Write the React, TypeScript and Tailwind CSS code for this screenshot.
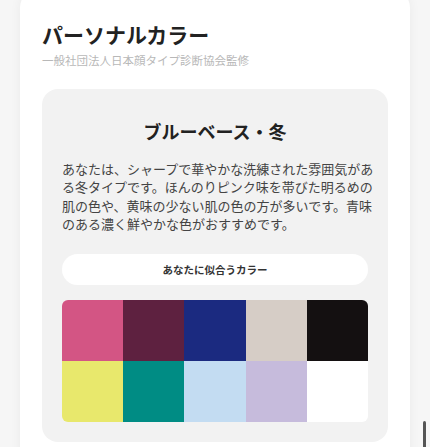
const swatches = [
  "#d35584",
  "#5e2140",
  "#1b2a80",
  "#d6cdc6",
  "#141011",
  "#e8e86c",
  "#008c84",
  "#c3dcf2",
  "#c6bbdc",
  "#ffffff",
];

export default function App() {
  return (
    <div
      className="relative h-[447px] w-[430px] overflow-hidden bg-[#f6f6f6]"
      style={{ fontFamily: '"Noto Sans CJK JP", "Noto Sans", sans-serif' }}
    >
      <div className="mx-[20px] -mt-[12px] rounded-[20px] bg-white px-[22px] pt-[32px] pb-[40px] shadow-[0_0_12px_rgba(0,0,0,0.05)]">
        <h1 className="text-[21px] leading-[28px] font-bold text-[#222]">パーソナルカラー</h1>
        <p className="mt-[4px] text-[11.5px] leading-[16px] text-[#b8b8b8]">一般社団法人日本顔タイプ診断協会監修</p>

        <div className="mt-[21px] rounded-[16px] bg-[#f2f2f2] px-[20px] pt-[28px] pb-[20px]">
          <h2 className="text-center text-[18px] leading-[28px] font-bold text-[#222]">ブルーベース・冬</h2>
          <p className="mt-[15px] w-[314px] text-[13px] leading-[18.3px] text-[#444]">
            あなたは、シャープで華やかな洗練された雰囲気がある冬タイプです。ほんのりピンク味を帯びた明るめの肌の色や、黄味の少ない肌の色の方が多いです。青味のある濃く鮮やかな色がおすすめです。
          </p>

          <div className="mt-[21px] flex h-[31px] items-center justify-center rounded-full bg-white text-[10.5px] font-bold text-[#333]">
            あなたに似合うカラー
          </div>

          <div className="mt-[15px] grid grid-cols-5 overflow-hidden rounded-[6px]">
            {swatches.map((c) => (
              <div key={c} className="h-[61px]" style={{ backgroundColor: c }} />
            ))}
          </div>
        </div>
      </div>

      <div className="absolute right-[4px] top-[421px] h-[30px] w-[3px] rounded-full bg-[#555]" />
    </div>
  );
}
